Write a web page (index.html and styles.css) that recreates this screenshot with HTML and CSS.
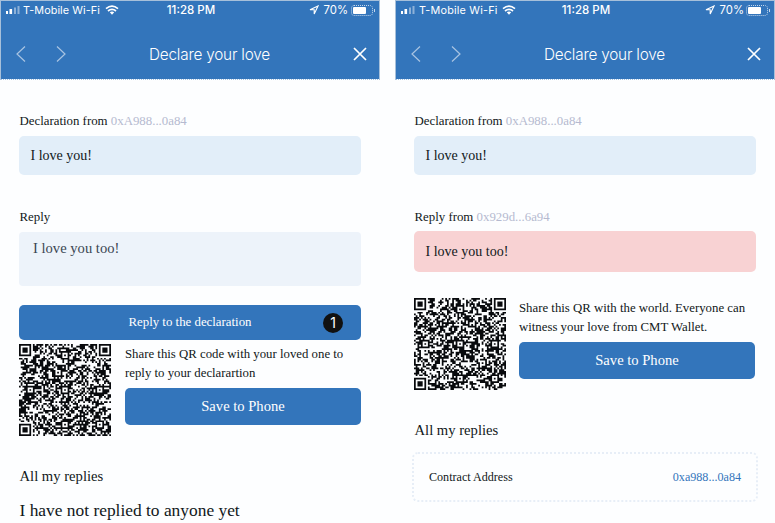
FILE: index.html
```html
<!DOCTYPE html>
<html lang="en">
<head>
<meta charset="utf-8">
<title>Declare your love</title>
<link rel="stylesheet" href="styles.css">
</head>
<body>
<svg class="defs" aria-hidden="true">
  <symbol id="signal" viewBox="0 0 16 8"><path d="M0 5h2v3H0zM3.5 3h2.6v5H3.500z" fill="#fff"/><path d="M8 1.500h2V8H8zM11.500 0h2v8h-2z" fill="#8db1d8"/></symbol>
  <symbol id="wifi" viewBox="0 0 14 10"><path d="M1 3.600Q7-1.300 13 3.600M3 6Q7 2.800 11 6" fill="none" stroke="#fff" stroke-width="1.700"/><path d="M4.800 7.300Q7 5.700 9.200 7.300L7 9.700z" fill="#fff"/></symbol>
  <symbol id="location" viewBox="0 0 10 10"><path d="M9 1 1 4.800h4.200V9z" fill="none" stroke="#fff" stroke-width="1.100"/></symbol>
  <symbol id="battery" viewBox="0 0 25 11"><rect x=".5" y=".5" width="21" height="10" rx="2.500" fill="none" stroke="#c4d7ec" stroke-dasharray="1 1"/><rect x="2" y="2" width="13" height="7" rx="1" fill="#fff"/><path d="M23.500 4v3" stroke="#c4d7ec"/></symbol>
  <symbol id="back" viewBox="0 0 10 16"><path d="M9 .5 1 8l8 7.500" fill="none" stroke="#a9c4e2" stroke-width="1.200"/></symbol>
  <symbol id="forward" viewBox="0 0 10 16"><path d="m1 .5 8 7.500-8 7.500" fill="none" stroke="#a9c4e2" stroke-width="1.200"/></symbol>
  <symbol id="close" viewBox="0 0 14 14"><path d="m1 1 12 12M13 1 1 13" stroke="#fff" stroke-width="1.700"/></symbol>
</svg>
<main class="screens">
  <section class="phone">
    <header class="header">
      <div class="status">
        <div class="carrier"><svg class="signal"><use href="#signal"/></svg><span class="network">T-Mobile Wi-Fi</span><svg class="wifi"><use href="#wifi"/></svg></div>
        <span class="time">11:28 PM</span>
        <div class="power"><svg class="location"><use href="#location"/></svg><span class="percent">70%</span><svg class="battery"><use href="#battery"/></svg></div>
      </div>
      <nav class="nav">
        <div class="arrows"><svg class="arrow"><use href="#back"/></svg><svg class="arrow"><use href="#forward"/></svg></div>
        <h1 class="title">Declare your love</h1>
        <svg class="close"><use href="#close"/></svg>
      </nav>
    </header>
    <div class="content">
      <div class="label"><span>Declaration from <span class="address">0xA988...0a84</span></span></div>
      <div class="message">I love you!</div>
      <div class="label label-reply">Reply</div>
      <div class="input">I love you too!</div>
      <div class="reply-button"><span>Reply to the declaration</span><span class="step">1</span></div>
      <div class="share share-left">
        <svg class="qr" viewBox="0 0 53 53" data-seed="17"></svg>
        <div class="share-info">
          <p class="share-text">Share this QR code with your loved one to<br>reply to your declarartion</p>
          <div class="save">Save to Phone</div>
        </div>
      </div>
      <h2 class="heading">All my replies</h2>
      <p class="empty">I have not replied to anyone yet</p>
    </div>
  </section>
  <section class="phone phone-right">
    <header class="header">
      <div class="status">
        <div class="carrier"><svg class="signal"><use href="#signal"/></svg><span class="network">T-Mobile Wi-Fi</span><svg class="wifi"><use href="#wifi"/></svg></div>
        <span class="time">11:28 PM</span>
        <div class="power"><svg class="location"><use href="#location"/></svg><span class="percent">70%</span><svg class="battery"><use href="#battery"/></svg></div>
      </div>
      <nav class="nav">
        <div class="arrows"><svg class="arrow"><use href="#back"/></svg><svg class="arrow"><use href="#forward"/></svg></div>
        <h1 class="title">Declare your love</h1>
        <svg class="close"><use href="#close"/></svg>
      </nav>
    </header>
    <div class="content">
      <div class="label"><span>Declaration from <span class="address">0xA988...0a84</span></span></div>
      <div class="message">I love you!</div>
      <div class="label label-reply"><span>Reply from <span class="address">0x929d...6a94</span></span></div>
      <div class="message message-pink">I love you too!</div>
      <div class="share share-right">
        <svg class="qr" viewBox="0 0 53 53" data-seed="43"></svg>
        <div class="share-info">
          <p class="share-text">Share this QR with the world. Everyone can<br>witness your love from CMT Wallet.</p>
          <div class="save">Save to Phone</div>
        </div>
      </div>
      <h2 class="heading">All my replies</h2>
      <div class="card"><span>Contract Address</span><span class="contract">0xa988...0a84</span></div>
    </div>
  </section>
</main>
<script src="qr.js"></script>
</body>
</html>
```
FILE: styles.css
```css
* { box-sizing: border-box; }
body { margin: 0; width: 775px; height: 523px; overflow: hidden; background: #fdfeff; color: #111820; font-family: "Liberation Serif", serif; }
h1, h2, p { margin: 0; font-weight: 400; }
svg { display: block; flex: none; }
.defs { width: 0; height: 0; position: absolute; }
.screens { display: flex; gap: 15px; white-space: nowrap; }
.phone { width: 380px; height: 523px; }
.header { height: 80px; background: #3375bb; background-clip: padding-box; border: 1px solid #a7c0da; border-bottom: 1px dotted #a5c3e2; color: #fff; font-family: Inter, sans-serif; }
.status { display: grid; grid-template-columns: 1fr auto 1fr; height: 18px; align-items: center; padding: 0 3px 0 5px; }
.carrier, .power { display: flex; align-items: center; }
.power { justify-content: flex-end; }
.signal { width: 16px; height: 8px; margin-right: 1px; }
.network { font-size: 10.8px; letter-spacing: .08px; }
.wifi { width: 14px; height: 10px; margin-left: 5px; }
.phone-right .signal { margin-right: 2px; }
.phone-right .network { letter-spacing: .2px; }
.phone-right .wifi { margin-left: 4px; }
.time { font-weight: 500; font-size: 11.5px; }
.location { width: 10px; height: 10px; margin-right: 5px; }
.percent { font-size: 11.3px; margin-right: 3px; }
.phone-right .percent { margin-right: 2px; }
.battery { width: 25px; height: 11px; }
.nav { display: flex; align-items: center; height: 34px; margin-top: 18px; padding: 0 12px 0 15px; }
.arrows { display: flex; gap: 30px; margin-right: 83px; }
.arrow { width: 10px; height: 16px; }
.title { font-size: 15.3px; letter-spacing: -.2px; font-weight: 300; }
.close { width: 14px; height: 14px; margin-left: auto; }
.phone-right .nav { padding-right: 13px; }
.content { padding: 32px 19px 0 19px; font-size: 12.85px; }
.label { height: 24px; padding-left: .5px; line-height: 18px; }
.address { color: #b5bad0; }
.message { height: 39px; padding-left: 11.5px; border-radius: 5px; background: #e2eef9; line-height: 39px; font-size: 14px; }
.label-reply { margin-top: 33px; }
.input { height: 54px; padding: 7px 14px; border-radius: 4px; background: #edf3fa; color: #3b4652; line-height: 18px; font-size: 14.6px; }
.message-pink { height: 41px; margin-top: -1px; background: #f8d2d3; line-height: 41px; }
.reply-button { position: relative; height: 35px; margin-top: 19px; border-radius: 5px; background: #3375bb; color: #fff; text-align: center; line-height: 35px; }
.step { position: absolute; top: 8px; right: 18px; width: 20px; height: 20px; border-radius: 50%; background: #111; line-height: 20px; font-family: Inter, sans-serif; font-size: 14px; }
.share { display: flex; gap: 13px; }
.share-left { margin-top: 4px; }
.share-left .share-info { padding-left: 1px; }
.share-right { margin-top: 26px; }
.qr { width: 92px; height: 92px; }
.share-info { flex: 1; }
.share-text { height: 44px; padding-top: 1px; line-height: 19px; font-size: 12.8px; }
.save { height: 37px; border-radius: 5px; background: #3375bb; color: #fff; line-height: 37px; text-align: center; font-size: 14.6px; }
.phone-right .save { margin-right: 1px; }
.heading { margin-top: 30px; height: 22px; padding-left: .5px; line-height: 20px; font-size: 14.65px; }
.empty { margin-top: 11px; padding-left: .5px; line-height: 22px; font-size: 17.4px; }
.card { display: flex; justify-content: space-between; align-items: center; height: 50px; margin: 10px -2px 0; padding: 0 15px; border: 2px dotted #e7eef7; border-radius: 6px; font-size: 12.1px; }
.contract { color: #3375bb; }
```
FILE: qr.js
```js
const SIZE = 53;
document.querySelectorAll('.qr').forEach(svg => {
  let seed = Number(svg.dataset.seed);
  const random = () => {
    seed = (seed * 1664525 + 1013904223) % 4294967296;
    return seed / 4294967296;
  };
  let d = '';
  for (let y = 0; y < SIZE; y++) {
    for (let x = 0; x < SIZE; x++) {
      let dark = random() < .53;
      for (const [fx, fy] of [[0, 0], [46, 0], [0, 46]]) {
        const r = Math.max(Math.abs(x - fx - 3), Math.abs(y - fy - 3));
        if (r <= 4) dark = r < 2 || r === 3;
      }
      for (const [ax, ay] of [[26, 6], [46, 26], [6, 26], [26, 26], [26, 46], [46, 46]]) {
        const r = Math.max(Math.abs(x - ax), Math.abs(y - ay));
        if (r <= 2) dark = r !== 1;
      }
      if (dark) d += `M${x} ${y}h1v1h-1z`;
    }
  }
  const path = document.createElementNS('http://www.w3.org/2000/svg', 'path');
  path.setAttribute('d', d);
  path.setAttribute('fill', '#080a0d');
  svg.append(path);
});
```
